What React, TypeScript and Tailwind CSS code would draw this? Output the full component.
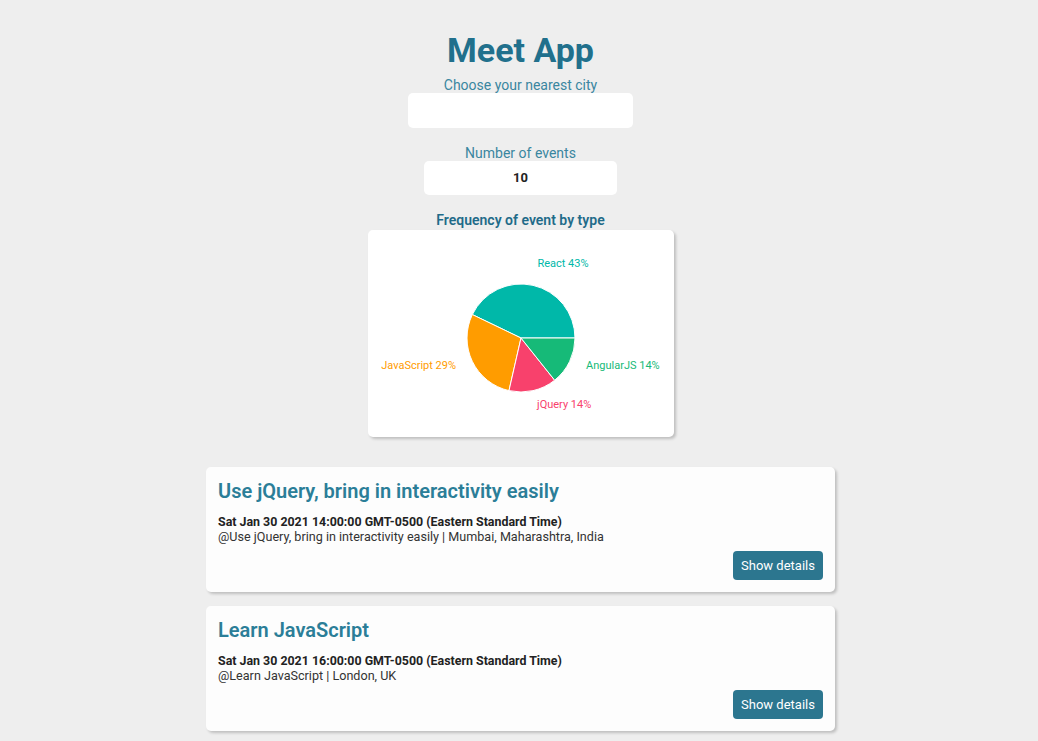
import React from "react";

const data = [
  { name: "React", value: 3, color: "#00b8a9" },
  { name: "JavaScript", value: 2, color: "#ff9c00" },
  { name: "jQuery", value: 1, color: "#f8416c" },
  { name: "AngularJS", value: 1, color: "#16ba78" },
];

function Pie() {
  const cx = 153;
  const cy = 108;
  const r = 54;
  const total = data.reduce((s, d) => s + d.value, 0);
  let a0 = 0;
  const pt = (deg: number) => {
    const rad = (deg * Math.PI) / 180;
    return [cx + r * Math.cos(rad), cy - r * Math.sin(rad)];
  };
  const slices = data.map((d) => {
    const a1 = a0 + (d.value / total) * 360;
    const [x0, y0] = pt(a0);
    const [x1, y1] = pt(a1);
    const large = a1 - a0 > 180 ? 1 : 0;
    const path = `M ${cx} ${cy} L ${x0} ${y0} A ${r} ${r} 0 ${large} 0 ${x1} ${y1} Z`;
    a0 = a1;
    return <path key={d.name} d={path} fill={d.color} stroke="#fff" strokeWidth={1} />;
  });
  return (
    <svg width="306" height="207" viewBox="0 0 306 207" style={{ fontFamily: "Roboto, sans-serif" }}>
      {slices}
      <text x="195" y="37" fontSize="11" fill="#00b8a9" textAnchor="middle">React 43%</text>
      <text x="88" y="139" fontSize="11" fill="#ff9c00" textAnchor="end">JavaScript 29%</text>
      <text x="218" y="139" fontSize="11" fill="#16ba78" textAnchor="start">AngularJS 14%</text>
      <text x="169" y="178" fontSize="11" fill="#f8416c" textAnchor="start">jQuery 14%</text>
    </svg>
  );
}

function EventCard({ title, date, desc }: { title: string; date: string; desc: string }) {
  return (
    <div className="w-[629px] h-[125px] bg-[#fdfdfd] rounded-[5px] shadow-[2px_2px_3px_rgba(0,0,0,0.2)] px-3 pt-[12px] flex flex-col">
      <h2 className="text-[20px] font-semibold text-[#2b7e98] leading-[24px]">{title}</h2>
      <div className="mt-[11px] text-[12.4px] font-bold text-[#222] leading-[15px]">{date}</div>
      <div className="text-[12.6px] text-[#333] leading-[16px]">{desc}</div>
      <div className="flex justify-end mt-[6px]">
        <button className="w-[90px] h-[29px] bg-[#2c768f] text-white text-[13px] rounded-[4px]">Show details</button>
      </div>
    </div>
  );
}

export default function App() {
  return (
    <div className="min-h-[741px] bg-[#eeeeee] flex flex-col items-center pl-[3px]" style={{ fontFamily: "Roboto, sans-serif" }}>
      <h1 className="mt-[30px] text-[34px] font-bold text-[#21708c] leading-[40px]">Meet App</h1>
      <div className="text-[14px] text-[#3a86a0] leading-[18px] mt-[6px]">Choose your nearest city</div>
      <div className="w-[225px] h-[35px] bg-white rounded-[5px] -mt-[1px]"></div>
      <div className="text-[14px] text-[#3a86a0] leading-[18px] mt-[16px]">Number of events</div>
      <div className="w-[193px] h-[34px] bg-white rounded-[5px] -mt-[1px] flex items-center justify-center text-[13px] font-bold text-[#222]">10</div>
      <div className="text-[14px] font-semibold text-[#1f6b89] leading-[18px] mt-[16px]">Frequency of event by type</div>
      <div className="w-[306px] h-[207px] bg-white rounded-[5px] shadow-[2px_2px_3px_rgba(0,0,0,0.2)] mt-[1px]">
        <Pie />
      </div>
      <div className="flex flex-col gap-[14px] mt-[30px] pb-[10px]">
        <EventCard
          title="Use jQuery, bring in interactivity easily"
          date="Sat Jan 30 2021 14:00:00 GMT-0500 (Eastern Standard Time)"
          desc="@Use jQuery, bring in interactivity easily | Mumbai, Maharashtra, India"
        />
        <EventCard
          title="Learn JavaScript"
          date="Sat Jan 30 2021 16:00:00 GMT-0500 (Eastern Standard Time)"
          desc="@Learn JavaScript | London, UK"
        />
      </div>
    </div>
  );
}
